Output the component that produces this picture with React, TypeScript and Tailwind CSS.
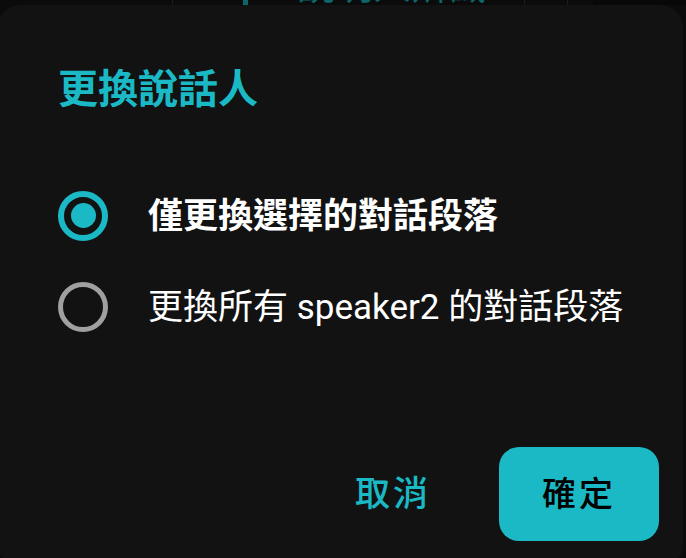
import { useState } from "react";

const font = { fontFamily: 'Roboto, "Noto Sans CJK TC", "Noto Sans", sans-serif' };

const Radio = ({ checked }: { checked: boolean }) =>
  checked ? (
    <span className="flex h-[50px] w-[50px] shrink-0 items-center justify-center rounded-full border-[6px] border-[#1ab9c5]">
      <span className="h-[25px] w-[25px] rounded-full bg-[#1ab9c5]" />
    </span>
  ) : (
    <span className="h-[50px] w-[50px] shrink-0 rounded-full border-[5px] border-[#a0a0a0]" />
  );

export default function App() {
  const [choice, setChoice] = useState(0);
  const options = ["僅更換選擇的對話段落", "更換所有 speaker2 的對話段落"];

  return (
    <div className="relative h-[558px] w-[686px] overflow-hidden bg-[#0b0b0b]" style={font}>
      {/* app header behind the scrim */}
      <div className="flex h-[5px] items-end overflow-hidden">
        <div className="h-full w-[173px] border-r border-[#1c1c1c]" />
        <div className="flex h-full w-[352px] items-end border-r border-[#1c1c1c]">
          <span className="ml-[70px] h-full w-[5px] bg-[#0e666d]" />
          <span className="ml-[49px] text-[38px] leading-none text-[#0e666d]">說明人辨識</span>
        </div>
        <div className="h-full w-[43px] border-r border-[#1c1c1c]" />
        <div className="h-full w-[25px]" />
        <div className="h-full flex-1 bg-[#080808]" />
      </div>

      {/* dialog */}
      <div className="absolute left-[-2px] top-[5px] flex h-[562px] w-[685px] flex-col rounded-[22px] bg-[#121212]">
        <h2 className="pl-[60px] pt-[65px] text-[40px] font-bold leading-none text-[#1ab9c5]">更換說話人</h2>

        <div className="mt-[60px] flex flex-col">
          {options.map((label, i) => (
            <button
              key={label}
              onClick={() => setChoice(i)}
              className="flex h-[91px] items-center pl-[60px] text-left"
            >
              <Radio checked={choice === i} />
              <span
                className={
                  "ml-[40px] mt-[2px] text-[35px] leading-none text-white " +
                  (choice === i ? "font-bold" : "font-normal")
                }
              >
                {label}
              </span>
            </button>
          ))}
        </div>

        <div className="mt-auto flex items-center justify-end pb-[26px] pr-[24px]">
          <button className="mr-[68px] text-[35px] font-medium leading-none tracking-[3px] text-[#1ab9c5]">取消</button>
          <button className="flex h-[94px] w-[160px] items-center justify-center rounded-[20px] bg-[#1ab9c5] text-[34px] font-medium leading-none tracking-[3px] text-black">
            確定
          </button>
        </div>
      </div>
    </div>
  );
}
